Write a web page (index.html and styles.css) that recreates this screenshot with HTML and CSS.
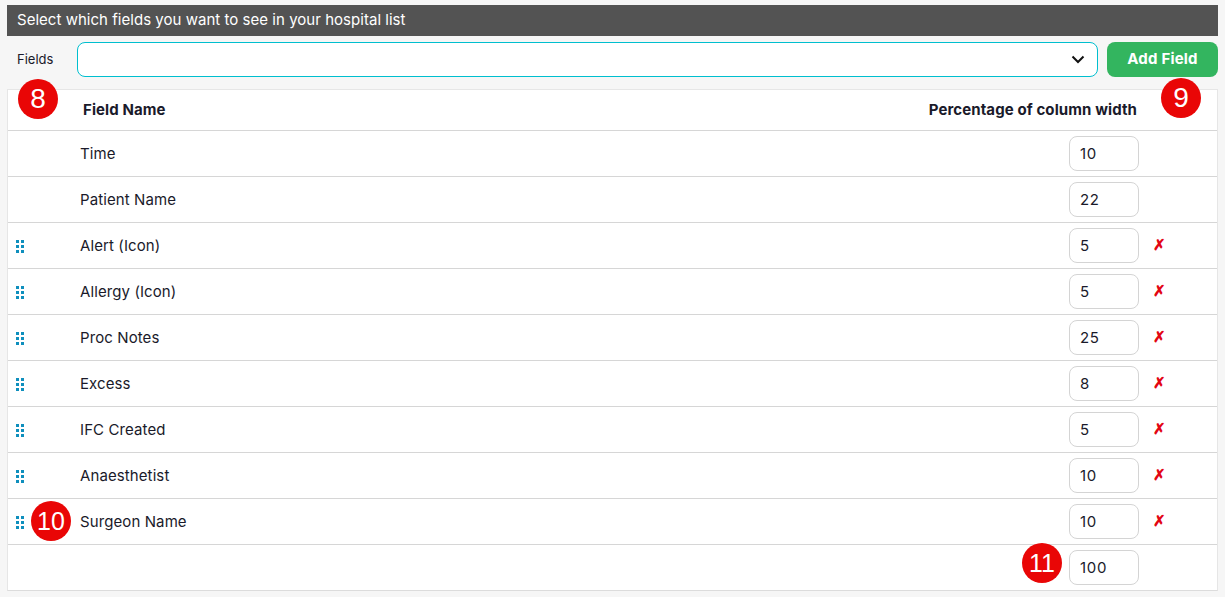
FILE: index.html
```html
<!DOCTYPE html>
<html lang="en">
<head>
<meta charset="utf-8">
<title>Hospital list fields</title>
<link rel="stylesheet" href="styles.css">
</head>
<body>
<div class="page">
  <div class="bar">Select which fields you want to see in your hospital list</div>
  <div class="picker">
    <span class="picker-label">Fields</span>
    <div class="select">
      <svg class="chev" width="14" height="9" viewBox="0 0 14 9"><path d="M1.5 1.5 7 7l5.5-5.5" fill="none" stroke="#111" stroke-width="2"/></svg>
    </div>
    <button class="add">Add Field</button>
  </div>
  <div class="table">
    <div class="row head">
      <span class="grip-cell"></span>
      <span class="name">Field Name</span>
      <span class="pct">Percentage of column width</span>
    </div>
    <div class="row"><span class="grip-cell"></span><span class="name">Time</span><span class="val">10</span></div>
    <div class="row"><span class="grip-cell"></span><span class="name">Patient Name</span><span class="val">22</span></div>
    <div class="row"><span class="grip-cell"><i class="grip"><b></b><b></b><b></b><b></b><b></b><b></b></i></span><span class="name">Alert (Icon)</span><span class="val">5</span><span class="del">✗</span></div>
    <div class="row"><span class="grip-cell"><i class="grip"><b></b><b></b><b></b><b></b><b></b><b></b></i></span><span class="name">Allergy (Icon)</span><span class="val">5</span><span class="del">✗</span></div>
    <div class="row"><span class="grip-cell"><i class="grip"><b></b><b></b><b></b><b></b><b></b><b></b></i></span><span class="name">Proc Notes</span><span class="val">25</span><span class="del">✗</span></div>
    <div class="row"><span class="grip-cell"><i class="grip"><b></b><b></b><b></b><b></b><b></b><b></b></i></span><span class="name">Excess</span><span class="val">8</span><span class="del">✗</span></div>
    <div class="row"><span class="grip-cell"><i class="grip"><b></b><b></b><b></b><b></b><b></b><b></b></i></span><span class="name">IFC Created</span><span class="val">5</span><span class="del">✗</span></div>
    <div class="row"><span class="grip-cell"><i class="grip"><b></b><b></b><b></b><b></b><b></b><b></b></i></span><span class="name">Anaesthetist</span><span class="val">10</span><span class="del">✗</span></div>
    <div class="row"><span class="grip-cell"><i class="grip"><b></b><b></b><b></b><b></b><b></b><b></b></i></span><span class="name">Surgeon Name</span><span class="val">10</span><span class="del">✗</span></div>
    <div class="row last"><span class="grip-cell"></span><span class="name"></span><span class="val">100</span></div>
  </div>
  <span class="badge b8">8</span>
  <span class="badge b9">9</span>
  <span class="badge b10">10</span>
  <span class="badge b11">11</span>
</div>
</body>
</html>
```
FILE: styles.css
```css
* { box-sizing: border-box; }
html, body { margin: 0; height: 100%; }
body { background: #f6f6f6; font-family: "Inter", "Noto Sans", sans-serif; color: #1a1a2a; overflow: hidden; }
.page { position: relative; padding: 5px 7px 0; }
.bar { height: 31px; background: #535353; color: #fff; font-size: 15px; letter-spacing: 0.03px; line-height: 30px; padding-left: 10px; }
.picker { display: flex; align-items: center; height: 35px; margin-top: 6px; }
.picker-label { width: 70px; padding-left: 10px; font-size: 13px; padding-bottom: 2px; }
.select { flex: 1; height: 35px; background: #fff; border: 1px solid #00bfcf; border-radius: 8px; display: flex; align-items: center; justify-content: flex-end; padding-right: 12px; }
.add { width: 111px; height: 35px; margin-left: 9px; background: #33b55f; border: 0; border-radius: 8px; color: #fff; padding: 0 0 2px; font: 700 15px "Inter", sans-serif; letter-spacing: 0.2px; }
.table { margin-top: 12px; background: #fff; border: 1px solid #e6e6e6; border-bottom: 1px solid #dcdcdc; }
.row { display: flex; align-items: center; height: 46px; border-bottom: 1px solid #d6d6d6; font-size: 15px; letter-spacing: 0.1px; }
.row.head { height: 41px; font-weight: 700; padding-bottom: 2px; }
.row.last { border-bottom: 0; height: 45px; }
.grip-cell { width: 72px; padding: 2px 0 0 8px; display: flex; align-items: center; flex: none; }
.grip { display: grid; grid-template-columns: 3px 3px; gap: 2px; }
.grip b { width: 3px; height: 3px; background: #0f8fbd; display: block; }
.name { flex: 1; }
.head .name { padding-left: 3px; }
.pct { margin-right: 80px; }
.val { width: 70px; height: 35px; flex: none; margin-right: 78px; border: 1px solid #d4d4d4; border-radius: 8px; padding-left: 10px; line-height: 33px; font-size: 15px; letter-spacing: 0.7px; background: #fff; }
.del { color: #e30613; font-size: 15px; font-weight: 700; margin-left: -64px; margin-right: 49px; width: 15px; margin-top: -3px; font-family: "Noto Sans", sans-serif; }
.badge { position: absolute; width: 40px; height: 40px; border-radius: 50%; background: #e90606; color: #fff; font-family: "Liberation Sans", sans-serif; font-size: 28px; line-height: 40px; text-align: center; }
.b8 { left: 18px; top: 79px; }
.b9 { left: 1161px; top: 78px; }
.b10 { left: 31px; top: 501px; font-size: 25px; }
.b11 { left: 1022px; top: 543px; font-size: 25px; }
```
